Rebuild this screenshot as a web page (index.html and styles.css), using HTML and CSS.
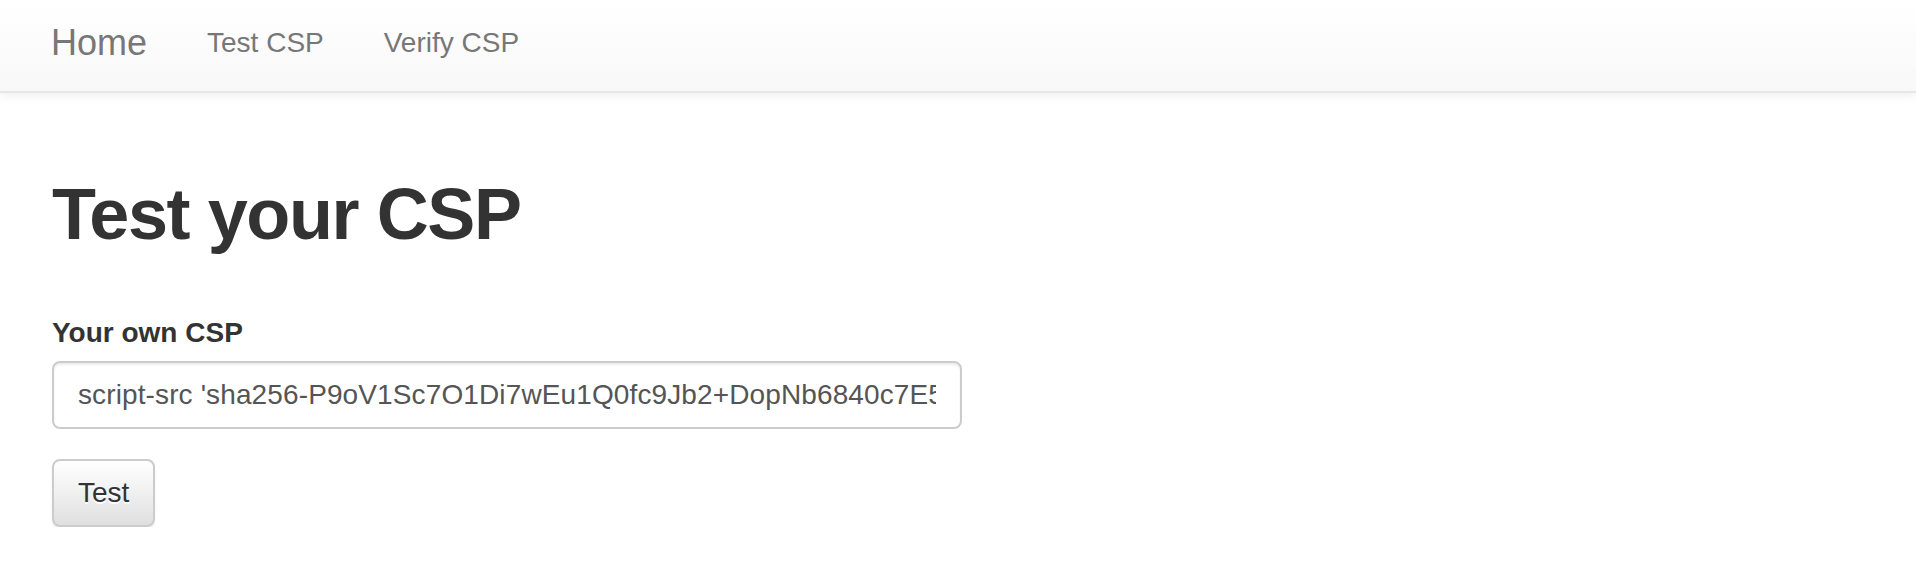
FILE: index.html
```html
<!DOCTYPE html>
<html lang="en">
<head>
<meta charset="utf-8">
<title>Test your CSP</title>
<link rel="stylesheet" href="styles.css">
</head>
<body>
<nav class="navbar">
  <a class="brand" href="#">Home</a>
  <a class="nav-link" href="#">Test CSP</a>
  <a class="nav-link" href="#">Verify CSP</a>
</nav>
<main class="content">
  <h1 class="title">Test your CSP</h1>
  <form class="csp-form">
    <label class="field-label" for="csp">Your own CSP</label>
    <input class="field-input" id="csp" type="text" value="script-src 'sha256-P9oV1Sc7O1Di7wEu1Q0fc9Jb2+DopNb6840c7E5hJk3sA=' 'self'">
    <button class="btn" type="button">Test</button>
  </form>
</main>
</body>
</html>
```

FILE: styles.css
```css
html, body {
  margin: 0;
  padding: 0;
  background: #fff;
}
body {
  font-family: "Liberation Sans", Arial, Helvetica, sans-serif;
  color: #333;
}
.navbar {
  box-sizing: border-box;
  height: 93px;
  padding: 23px 0 0 21px;
  display: flex;
  align-items: flex-start;
  background: linear-gradient(to bottom, #ffffff 0%, #f8f8f8 100%);
  border-bottom: 2px solid #e7e7e7;
  box-shadow: 0 2px 10px rgba(0, 0, 0, 0.075);
}
.brand {
  padding: 0 30px;
  font-size: 36px;
  line-height: 40px;
  color: #777;
  text-decoration: none;
}
.nav-link {
  padding: 0 30px;
  font-size: 28px;
  line-height: 40px;
  color: #777;
  text-decoration: none;
}
.content {
  padding: 82px 0 0 52px;
}
.title {
  margin: 0;
  font-size: 72px;
  line-height: 79px;
  font-weight: bold;
  letter-spacing: -1.4px;
  color: #333;
}
.csp-form {
  margin-top: 59px;
  display: flex;
  flex-direction: column;
  align-items: flex-start;
}
.field-label {
  display: block;
  font-size: 28px;
  line-height: 40px;
  font-weight: bold;
  color: #333;
  margin-bottom: 8px;
}
.field-input {
  box-sizing: border-box;
  width: 910px;
  height: 68px;
  padding: 12px 24px;
  border: 2px solid #ccc;
  border-radius: 8px;
  font-family: "Liberation Sans", Arial, sans-serif;
  font-size: 28px;
  letter-spacing: 0.12px;
  color: #555;
  background: #fff;
  box-shadow: inset 0 2px 2px rgba(0, 0, 0, 0.075);
  outline: none;
  margin: 0 0 30px 0;
}
.btn {
  box-sizing: border-box;
  height: 68px;
  padding: 12px 24px;
  border: 2px solid #ccc;
  border-radius: 8px;
  font-family: "Liberation Sans", Arial, sans-serif;
  font-size: 28px;
  line-height: 40px;
  color: #333;
  background: linear-gradient(to bottom, #ffffff 0%, #e0e0e0 100%);
  text-shadow: 0 2px 0 #fff;
  box-shadow: inset 0 2px 0 rgba(255, 255, 255, 0.15), 0 2px 2px rgba(0, 0, 0, 0.075);
  cursor: pointer;
}
```
